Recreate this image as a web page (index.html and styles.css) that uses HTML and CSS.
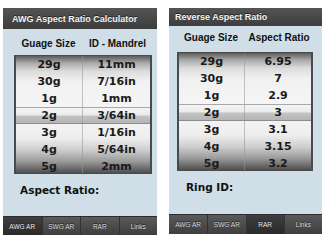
FILE: index.html
```html
<!DOCTYPE html>
<html>
<head>
<meta charset="utf-8">
<link rel="stylesheet" href="styles.css">
</head>
<body>
<div class="screen">
  <div class="phone phone-a">
    <div class="titlebar">AWG Aspect Ratio Calculator</div>
    <div class="content">
      <div class="headers"><span>Guage Size</span><span>ID - Mandrel</span></div>
      <div class="picker">
        <div class="row"><span>29g</span><span>11mm</span></div>
        <div class="row"><span>30g</span><span>7/16in</span></div>
        <div class="row"><span>1g</span><span>1mm</span></div>
        <div class="row sel"><span>2g</span><span>3/64in</span></div>
        <div class="row"><span>3g</span><span>1/16in</span></div>
        <div class="row"><span>4g</span><span>5/64in</span></div>
        <div class="row"><span>5g</span><span>2mm</span></div>
      </div>
      <div class="result">Aspect Ratio:</div>
    </div>
    <div class="tabbar">
      <div class="tab active">AWG AR</div>
      <div class="tab">SWG AR</div>
      <div class="tab">RAR</div>
      <div class="tab">Links</div>
    </div>
  </div>
  <div class="phone phone-b">
    <div class="titlebar">Reverse Aspect Ratio</div>
    <div class="content">
      <div class="headers"><span>Guage Size</span><span>Aspect Ratio</span></div>
      <div class="picker">
        <div class="row"><span>29g</span><span>6.95</span></div>
        <div class="row"><span>30g</span><span>7</span></div>
        <div class="row"><span>1g</span><span>2.9</span></div>
        <div class="row sel"><span>2g</span><span>3</span></div>
        <div class="row"><span>3g</span><span>3.1</span></div>
        <div class="row"><span>4g</span><span>3.15</span></div>
        <div class="row"><span>5g</span><span>3.2</span></div>
      </div>
      <div class="result">Ring ID:</div>
    </div>
    <div class="tabbar">
      <div class="tab">AWG AR</div>
      <div class="tab">SWG AR</div>
      <div class="tab active">RAR</div>
      <div class="tab">Links</div>
    </div>
  </div>
</div>
</body>
</html>
```
FILE: styles.css
```css
* { box-sizing: border-box; }
html, body { margin: 0; padding: 0; background: #ffffff; }
body { width: 330px; height: 245px; overflow: hidden; font-family: "Liberation Sans", Arial, sans-serif; }

.screen {
  display: flex;
  align-items: flex-start;
  padding: 8px 0 0 3px;
  gap: 12px;
}

.phone {
  display: flex;
  flex-direction: column;
  background: #cfdee7;
}
.phone-a { width: 154px; height: 227px; }
.phone-b { width: 153px; height: 226px; }

.titlebar {
  background: linear-gradient(#545454, #3d3d3d);
  color: #f4f4f4;
  font-weight: bold;
  font-size: 9px;
  display: flex;
  align-items: center;
  padding-left: 9px;
  text-shadow: 0 -1px 0 #222;
}
.phone-a .titlebar { height: 21px; }
.phone-b .titlebar { height: 18px; padding-left: 6px; }

.content {
  flex: 1;
  display: flex;
  flex-direction: column;
}

.headers {
  display: grid;
  grid-template-columns: 1fr 1fr;
  font-size: 10px;
  font-weight: bold;
  color: #111;
  text-align: center;
  height: 12px;
  line-height: 12px;
}
.phone-a .headers { margin: 9px 5px 0 11px; }
.phone-b .headers { margin: 6px 9px 0 8px; }

.picker {
  display: flex;
  flex-direction: column;
  border: 1px solid #4a4a4a;
  border-left-width: 2px;
  border-right-width: 2px;
  background: linear-gradient(#5c5c5c 0%, #a9a9a9 6%, #dcdcdc 13%, #f1f1f1 22%, #f6f6f6 50%, #eeeeee 70%, #cfcfcf 80%, #9a9a9a 90%, #4e4e4e 100%);
  font-family: "DejaVu Sans", Verdana, sans-serif;
  font-weight: bold;
  font-size: 11px;
  color: #1a1a1a;
  height: 119px;
}
.phone-a .picker { margin: 5px 5px 0 11px; }
.phone-b .picker { margin: 8px 9px 0 8px; }

.row {
  display: grid;
  grid-template-columns: 1fr 1fr;
  height: 17px;
  line-height: 17px;
  text-align: center;
  flex: 1;
}
.row span:first-child { border-right: 1px solid rgba(150,150,150,0.55); }
.row.sel {
  background: linear-gradient(#f4f4f4 0%, #ececec 45%, #c3c3c3 55%, #b5b5b5 100%);
  border-top: 1px solid #a8a8a8;
  border-bottom: 1px solid #8c8c8c;
  line-height: 15px;
}

.result {
  font-family: "DejaVu Sans", Verdana, sans-serif;
  font-weight: bold;
  font-size: 10.5px;
  color: #111;
  padding-left: 17px;
  margin-top: 10px;
}

.tabbar {
  display: grid;
  grid-template-columns: repeat(4, 1fr);
  background: linear-gradient(#5a5a5a, #3e3e3e);
  border-top: 1px solid #2c2c2c;
}
.phone-a .tabbar { height: 19px; }
.phone-b .tabbar { height: 20px; }
.tab {
  display: flex;
  align-items: center;
  justify-content: center;
  font-size: 6.5px;
  color: #d8d8d8;
  border-left: 1px solid #333;
  text-shadow: 0 -1px 0 #222;
}
.tab:first-child { border-left: none; }
.tab.active { background: linear-gradient(#3e3e3e, #2a2a2a); color: #e8e8e8; }
```
